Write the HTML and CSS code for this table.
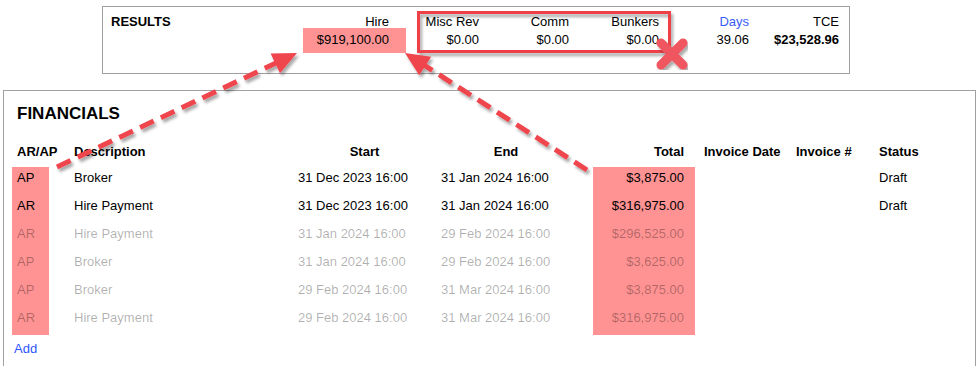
FILE: index.html
```html
<!DOCTYPE html>
<html>
<head>
<meta charset="utf-8">
<link rel="stylesheet" href="styles.css">
</head>
<body>
<div class="page">
  <section class="results">
    <div class="rgrid">
      <div class="rtitle">RESULTS</div>
      <div class="rc">Hire</div>
      <div class="rc">Misc Rev</div>
      <div class="rc">Comm</div>
      <div class="rc">Bunkers</div>
      <div class="rc link">Days</div>
      <div class="rc">TCE</div>
      <div></div>
      <div class="rc"><span class="hl-box">$919,100.00</span></div>
      <div class="rc">$0.00</div>
      <div class="rc">$0.00</div>
      <div class="rc">$0.00</div>
      <div class="rc">39.06</div>
      <div class="rc bold">$23,528.96</div>
    </div>
  </section>

  <section class="fin">
    <h2 class="fin-title">FINANCIALS</h2>
    <div class="frow fhead">
      <div class="c1">AR/AP</div>
      <div class="c2">Description</div>
      <div class="c3">Start</div>
      <div class="c4">End</div>
      <div class="c5">Total</div>
      <div class="c6">Invoice Date</div>
      <div class="c7">Invoice #</div>
      <div class="c8">Status</div>
    </div>
    <div class="frow">
      <div class="c1 hl">AP</div><div class="c2">Broker</div><div class="c3">31 Dec 2023 16:00</div><div class="c4">31 Jan 2024 16:00</div><div class="c5 hl">$3,875.00</div><div class="c6"></div><div class="c7"></div><div class="c8">Draft</div>
    </div>
    <div class="frow">
      <div class="c1 hl">AR</div><div class="c2">Hire Payment</div><div class="c3">31 Dec 2023 16:00</div><div class="c4">31 Jan 2024 16:00</div><div class="c5 hl">$316,975.00</div><div class="c6"></div><div class="c7"></div><div class="c8">Draft</div>
    </div>
    <div class="frow muted">
      <div class="c1 hl">AR</div><div class="c2">Hire Payment</div><div class="c3">31 Jan 2024 16:00</div><div class="c4">29 Feb 2024 16:00</div><div class="c5 hl">$296,525.00</div><div class="c6"></div><div class="c7"></div><div class="c8"></div>
    </div>
    <div class="frow muted">
      <div class="c1 hl">AP</div><div class="c2">Broker</div><div class="c3">31 Jan 2024 16:00</div><div class="c4">29 Feb 2024 16:00</div><div class="c5 hl">$3,625.00</div><div class="c6"></div><div class="c7"></div><div class="c8"></div>
    </div>
    <div class="frow muted">
      <div class="c1 hl">AP</div><div class="c2">Broker</div><div class="c3">29 Feb 2024 16:00</div><div class="c4">31 Mar 2024 16:00</div><div class="c5 hl">$3,875.00</div><div class="c6"></div><div class="c7"></div><div class="c8"></div>
    </div>
    <div class="frow muted">
      <div class="c1 hl">AR</div><div class="c2">Hire Payment</div><div class="c3">29 Feb 2024 16:00</div><div class="c4">31 Mar 2024 16:00</div><div class="c5 hl">$316,975.00</div><div class="c6"></div><div class="c7"></div><div class="c8"></div>
    </div>
    <a class="add" href="#">Add</a>
  </section>

  <svg class="overlay" width="978" height="366" viewBox="0 0 978 366" xmlns="http://www.w3.org/2000/svg">
    <defs>
      <filter id="sh" x="-20%" y="-20%" width="140%" height="140%">
        <feDropShadow dx="2" dy="3" stdDeviation="1.5" flood-color="#000" flood-opacity="0.35"/>
      </filter>
    </defs>
    <rect x="418.5" y="12.5" width="251" height="39" fill="none" stroke="#ef4047" stroke-width="3" filter="url(#sh)"/>
    <g filter="url(#sh)">
      <line x1="57" y1="167" x2="277" y2="62.5" stroke="#ef454d" stroke-width="5" stroke-dasharray="15 8"/>
      <polygon points="297,53 280,73.2 270.6,53.4" fill="#ef454d"/>
      <line x1="587" y1="170" x2="424" y2="65" stroke="#ef454d" stroke-width="5" stroke-dasharray="15 8"/>
      <polygon points="405,53 431.2,56.7 419.2,75.3" fill="#ef454d"/>
    </g>
    <g filter="url(#sh)" stroke="#f0565e" stroke-width="9" stroke-linecap="round">
      <line x1="661" y1="43" x2="683" y2="65"/>
      <line x1="683" y1="43" x2="661" y2="65"/>
    </g>
  </svg>
</div>
</body>
</html>
```

FILE: styles.css
```css
* { box-sizing: border-box; }
html, body { margin: 0; padding: 0; background: #fff; }
body {
  font-family: "Liberation Sans", Arial, sans-serif;
  font-size: 13px;
  color: #000;
  width: 978px;
  height: 366px;
  overflow: hidden;
}
.page {
  position: relative;
  width: 978px;
  height: 366px;
  padding-top: 6px;
}

.results {
  margin-left: 102px;
  width: 748px;
  height: 68px;
  border: 1px solid #a0a0a0;
  padding: 6px 10px 0 8px;
}
.rgrid {
  display: grid;
  grid-template-columns: 188px repeat(6, 90px);
  line-height: 18px;
}
.rtitle { font-weight: bold; }
.rc { text-align: right; white-space: nowrap; }
.link { color: #3a5cf5; }
.bold { font-weight: bold; }
.hl-box {
  display: inline-block;
  background: #ff9393;
  padding: 3px 17px 4px 14px;
  margin: -3px -17px -4px -14px;
}

.fin {
  margin: 16px 0 0 3px;
  width: 973px;
  height: 290px;
  border: 1px solid #a0a0a0;
  border-bottom: none;
  padding: 0 0 0 8px;
}
.fin-title {
  margin: 0;
  padding: 13px 0 0 5px;
  font-size: 17px;
  line-height: 20px;
  font-weight: bold;
}
.frow {
  display: grid;
  grid-template-columns: 37px 244px 143px 157px 102px 92px 83px 1fr;
  height: 28px;
  line-height: 15px;
}
.frow > div { padding-top: 3px; white-space: nowrap; }
.fhead {
  margin-top: 20px;
  height: 23px;
  font-weight: bold;
}
.fhead > div { padding-top: 0; }
.c1 { padding-left: 5px; }
.c2 { padding-left: 25px; }
.c3 { padding: 0 5px; }
.c4 { padding: 0 22px 0 5px; }
.c5 { padding-right: 11px; text-align: right; }
.c6, .c7, .c8 { padding-left: 9px; }
.fhead .c3, .fhead .c4 { text-align: center; }
.hl { background: #ff9393; }
.muted { color: rgba(0, 0, 0, 0.31); }
.add {
  display: block;
  margin: 6px 0 0 2px;
  line-height: 15px;
  color: #2f55ff;
  text-decoration: none;
}

.overlay { position: absolute; left: 0; top: 0; pointer-events: none; }
```
